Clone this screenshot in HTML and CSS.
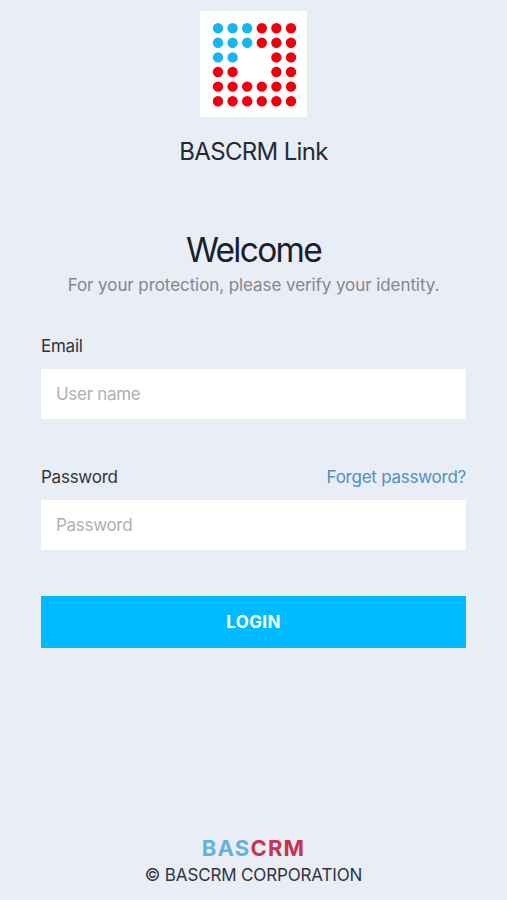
FILE: index.html
```html
<!DOCTYPE html>
<html lang="en">
<head>
  <meta charset="UTF-8">
  <meta name="viewport" content="width=device-width, initial-scale=1.0">
  <title>BASCRM Link</title>
  <link rel="stylesheet" href="styles.css">
</head>
<body>
  <header class="brand">
    <svg class="logo" viewBox="0 0 107 106">
      <rect width="107" height="106" fill="#fff"/>
      <g class="dots">
        <!-- round dots, one dashed line per row -->
        <path class="blue" d="M18 17.2h30M18 31.8h30M18 46.4h15"/>
        <path class="red" d="M61.8 17.2h30M61.8 31.8h30M76.4 46.4h15M18 61h15M76.4 61h15M18 75.6h74M18 90.2h74"/>
      </g>
    </svg>
    <h1 class="app-name">BASCRM Link</h1>
  </header>

  <main>
    <h2 class="welcome">Welcome</h2>
    <p class="hint">For your protection, please verify your identity.</p>

    <form class="login-form">
      <div class="label-row">
        <label for="email">Email</label>
      </div>
      <input class="field" type="text" id="email" placeholder="User name">

      <div class="label-row">
        <label for="password">Password</label>
        <a class="forget" href="#">Forget password?</a>
      </div>
      <input class="field" type="password" id="password" placeholder="Password">

      <button class="login-button" type="button">LOGIN</button>
    </form>
  </main>

  <footer class="footer">
    <div class="wordmark"><span class="bas">BAS</span><span class="crm">CRM</span></div>
    <p class="copyright">© BASCRM CORPORATION</p>
  </footer>
</body>
</html>
```
FILE: styles.css
```css
* {
  margin: 0;
  padding: 0;
  box-sizing: border-box;
}

body {
  font-family: Inter, sans-serif;
  font-size: 17px;
  display: flex;
  flex-direction: column;
  height: 900px;
  padding: 11px 41px 13px;
  overflow: hidden;
  color: #303440;
  background: #e9edf6;
}

.brand {
  display: flex;
  flex-direction: column;
  align-items: center;
}

.logo {
  width: 107px;
  height: 106px;
}

.dots {
  fill: none;
  stroke-width: 10.4;
  stroke-linecap: round;
  stroke-dasharray: 0 14.6;
}

.blue {
  stroke: #19b5ee;
}

.red {
  stroke: #f0000f;
}

.app-name {
  margin-top: 20px;
  font-size: 24px;
  font-weight: 400;
  line-height: 30px;
  letter-spacing: -0.65px;
  color: #252a35;
}

main {
  margin-top: 63px;
}

.welcome {
  font-size: 33.5px;
  font-weight: 400;
  line-height: 40px;
  letter-spacing: -1.7px;
  text-align: center;
  color: #1a1f2b;
}

.hint {
  margin-top: 3px;
  line-height: 24px;
  letter-spacing: -0.08px;
  text-align: center;
  color: #85878b;
}

.label-row {
  display: flex;
  justify-content: space-between;
  line-height: 24px;
  letter-spacing: -0.25px;
}

.login-form {
  margin-top: 37px;
}

.field {
  display: block;
  width: 100%;
  height: 50px;
  margin: 11px 0 46px;
  padding: 0 15px;
  border: none;
  font: inherit;
  letter-spacing: -0.3px;
  background: #fff;
}

.field::placeholder {
  color: #b0b0b0;
}

.forget {
  color: #508fc4;
  text-decoration: none;
}

.login-button {
  display: block;
  width: 100%;
  height: 52px;
  border: none;
  font: inherit;
  font-weight: 700;
  letter-spacing: 0.4px;
  color: #fff;
  background: #00bbff;
}

.footer {
  margin-top: auto;
  text-align: center;
}

.wordmark {
  margin-bottom: 2px;
  font-size: 22px;
  font-weight: 700;
  line-height: 26px;
  letter-spacing: 1.2px;
}

.bas {
  color: #64b4d8;
}

.crm {
  color: #c4364c;
}

.copyright {
  line-height: 24px;
  letter-spacing: -0.15px;
}
```
